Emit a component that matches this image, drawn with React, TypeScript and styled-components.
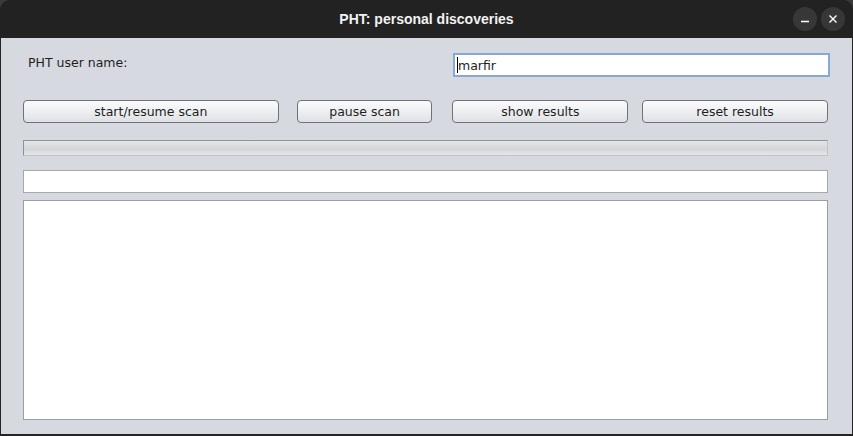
import React from "react";
import styled, { createGlobalStyle } from "styled-components";

const GlobalStyle = createGlobalStyle`
  html, body {
    margin: 0;
    padding: 0;
    background: #3a3a3a;
  }
  body {
    font-family: "DejaVu Sans", sans-serif;
  }
`;

const Window = styled.div`
  width: 853px;
  height: 436px;
  display: flex;
  flex-direction: column;
  background: #242424;
  border-radius: 10px 10px 0 0;
  overflow: hidden;
`;

const TitleBar = styled.div`
  height: 38px;
  flex: none;
  display: flex;
  align-items: center;
  justify-content: center;
  position: relative;
  background: #222222;
  color: #f2f2f2;
  font-family: "Liberation Sans", sans-serif;
  font-weight: bold;
  font-size: 14px;
`;

const TitleControls = styled.div`
  position: absolute;
  right: 8px;
  top: 7px;
  display: flex;
  gap: 4px;
`;

const RoundButton = styled.div`
  width: 24px;
  height: 24px;
  border-radius: 50%;
  background: #373737;
  display: flex;
  align-items: center;
  justify-content: center;
`;

const Content = styled.div`
  flex: 1;
  margin: 0 1px 2px 1px;
  background: #d6d9df;
  padding: 15px 24px 14px 22px;
  display: flex;
  flex-direction: column;
  color: #1e1e1e;
  font-size: 12.5px;
`;

const UserRow = styled.div`
  display: flex;
  align-items: flex-start;
  justify-content: space-between;
  height: 24px;
`;

const UserLabel = styled.span`
  padding-left: 5px;
  line-height: 20px;
`;

const NameField = styled.div`
  width: 371px;
  height: 20px;
  border: 2px solid #86a8d2;
  background: #ffffff;
  display: flex;
  align-items: center;
  padding-left: 2px;
  margin-right: -2px;
  font-size: 12.5px;
`;

const Caret = styled.span`
  display: inline-block;
  width: 1px;
  height: 16px;
  background: #000;
`;

const ButtonRow = styled.div`
  display: flex;
  margin-top: 23px;
  height: 23px;
`;

const ActionButton = styled.button<{ $width: number; $gap: number }>`
  width: ${(p) => p.$width}px;
  margin-left: ${(p) => p.$gap}px;
  height: 23px;
  padding: 0;
  border: 1px solid #6f727a;
  border-radius: 4px;
  background: linear-gradient(180deg, #fbfbfc 0%, #eff0f2 45%, #dfe1e5 100%);
  font-family: "DejaVu Sans", sans-serif;
  font-size: 12.5px;
  color: #1e1e1e;
`;

const Progress = styled.div`
  margin-top: 17px;
  height: 14px;
  border: 1px solid #8e9197;
  border-right-color: #c0c2c6;
  border-bottom-color: #c0c2c6;
  background: linear-gradient(180deg, #e4e5e7 0%, #d8d9dc 45%, #d4d5d8 60%, #e6e7e9 100%);
`;

const StatusField = styled.div`
  margin-top: 14px;
  height: 21px;
  border: 1px solid #a5a8ad;
  background: #ffffff;
`;

const LogArea = styled.div`
  margin-top: 7px;
  flex: 1;
  border: 1px solid #9a9da4;
  background: #ffffff;
`;

const buttons = [
  { label: "start/resume scan", width: 256, gap: 0 },
  { label: "pause scan", width: 136, gap: 18 },
  { label: "show results", width: 176, gap: 20 },
  { label: "reset results", width: 186, gap: 14 },
];

export default function App() {
  return (
    <>
      <GlobalStyle />
      <Window>
        <TitleBar>
          PHT: personal discoveries
          <TitleControls>
            <RoundButton>
              <svg width="10" height="10" viewBox="0 0 10 10">
                <path d="M1 7.5h8" stroke="#ffffff" strokeWidth="1.3" />
              </svg>
            </RoundButton>
            <RoundButton>
              <svg width="10" height="10" viewBox="0 0 10 10">
                <path d="M1.5 1.5l7 7M8.5 1.5l-7 7" stroke="#ffffff" strokeWidth="1.4" />
              </svg>
            </RoundButton>
          </TitleControls>
        </TitleBar>
        <Content>
          <UserRow>
            <UserLabel>PHT user name:</UserLabel>
            <NameField>
              <Caret />
              marfir
            </NameField>
          </UserRow>
          <ButtonRow>
            {buttons.map((b) => (
              <ActionButton key={b.label} $width={b.width} $gap={b.gap}>
                {b.label}
              </ActionButton>
            ))}
          </ButtonRow>
          <Progress />
          <StatusField />
          <LogArea />
        </Content>
      </Window>
    </>
  );
}
